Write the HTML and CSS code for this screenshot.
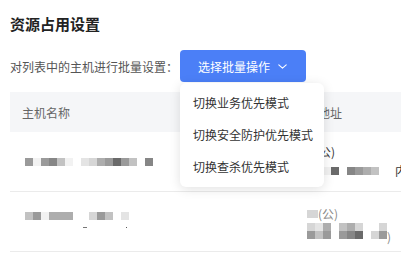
FILE: index.html
```html
<!DOCTYPE html>
<html lang="zh-CN">
<head>
    <meta charset="UTF-8">
    <meta name="viewport" content="width=device-width, initial-scale=1.0">
    <title>资源占用设置</title>
    <link rel="stylesheet" href="styles.css">
</head>
<body>
    <div class="panel">
        <h2 class="title">资源占用设置</h2>

        <div class="batch">
            <span class="batch-label">对列表中的主机进行批量设置：</span>
            <div class="batch-select">
                <button class="batch-btn">选择批量操作
                    <svg class="chevron" width="9" height="5" viewBox="0 0 9 5">
                        <polyline points="0.8,0.8 4.5,4.2 8.2,0.8" fill="none" stroke="#fff" stroke-width="1.1" stroke-linecap="round" stroke-linejoin="round"/>
                    </svg>
                </button>
                <ul class="menu">
                    <li class="menu-item">切换业务优先模式</li>
                    <li class="menu-item">切换安全防护优先模式</li>
                    <li class="menu-item">切换查杀优先模式</li>
                </ul>
            </div>
        </div>

        <div class="table">
            <div class="row head">
                <div class="cell">主机名称</div>
                <div class="cell">IP地址</div>
            </div>

            <div class="row">
                <div class="cell">
                    <div class="mask first">
                        <i class="s6"></i><i class="s1"></i><i class="s6"></i><i class="s7"></i><i class="s4"></i><i class="s1"></i><i class="s0"></i><i class="s2"></i><i class="s3"></i><i class="s5"></i><i class="s6"></i><i class="s8"></i><i class="s6"></i><i class="s4"></i><i class="s0"></i><i class="s7"></i>
                    </div>
                </div>
                <div class="cell lines">
                    <div class="line"><i class="s3"></i><span class="txt">(公)</span></div>
                    <div class="line">
                        <i class="s4"></i><i class="s3"></i><i class="s1"></i><i class="s8"></i><i class="s0"></i><i class="s7"></i><i class="s6"></i><i class="s5"></i><i class="s4"></i><i class="s0"></i><i class="s0"></i><span class="txt">内</span>
                    </div>
                </div>
            </div>

            <div class="row">
                <div class="cell lines">
                    <div class="mask first">
                        <i class="s4"></i><i class="s6"></i><i class="s1"></i><i class="s5"></i><i class="s5"></i><i class="s5"></i><i class="s0"></i><i class="s0"></i><i class="s3"></i><i class="s6"></i><i class="s4"></i><i class="s0"></i><i class="s2"></i>
                    </div>
                    <div class="marks"><b class="dash"></b><b class="dot"></b></div>
                </div>
                <div class="cell lines">
                    <div class="line"><i class="s3 slim"></i><span class="txt faded">(公)</span></div>
                    <div class="mask">
                        <i class="s3"></i><i class="s2"></i><i class="s5"></i><i class="s0"></i><i class="s4"></i><i class="s5"></i><i class="s3"></i><i class="s0"></i><i class="s0"></i><i class="s3"></i>
                    </div>
                    <div class="mask">
                        <i class="s6"></i><i class="s4"></i><i class="s6"></i><i class="s0"></i><i class="s6"></i><i class="s7"></i><i class="s8"></i><i class="s0"></i><i class="s3"></i><i class="s6"></i><span class="txt faded">)</span>
                    </div>
                </div>
            </div>
        </div>
    </div>
</body>
</html>
```

FILE: styles.css
```css
* {
    margin: 0;
    padding: 0;
    box-sizing: border-box;
}

body {
    font-family: "Noto Sans CJK SC", "Noto Sans", sans-serif;
    background-color: #fff;
    color: #333;
    overflow: hidden;
}

.panel {
    padding: 14px 0 0 10px;
}

.title {
    font-size: 15px;
    font-weight: 700;
    color: #222;
    line-height: 20px;
}

.batch {
    display: flex;
    align-items: center;
    margin-top: 16px;
}

.batch-label {
    font-size: 12px;
    color: #555;
    margin-right: 2px;
}

.batch-select {
    position: relative;
}

.batch-btn {
    display: flex;
    align-items: center;
    height: 32px;
    width: 126px;
    padding-left: 18px;
    background-color: #4b7ff7;
    color: #fff;
    font-family: inherit;
    font-size: 12px;
    border: none;
    border-radius: 4px;
}

.chevron {
    margin-left: 8px;
}

.menu {
    position: absolute;
    top: 33px;
    left: 0;
    width: 144px;
    padding: 4px 0;
    list-style: none;
    background-color: #fff;
    border-radius: 6px;
    box-shadow: 0 2px 12px rgba(0, 0, 0, 0.12);
    z-index: 2;
}

.menu-item {
    height: 32px;
    line-height: 32px;
    padding-left: 13px;
    font-size: 12px;
    color: #333;
    white-space: nowrap;
}

.table {
    margin-top: 10px;
    width: 400px;
}

.row {
    display: grid;
    grid-template-columns: 285px 1fr;
    height: 60px;
    border-bottom: 1px solid #ebebeb;
}

.row.head {
    height: 40px;
    background-color: #f5f6f8;
    border-bottom: none;
}

.cell {
    display: flex;
    align-items: center;
    padding: 0 12px;
    font-size: 12px;
    color: #666;
    white-space: nowrap;
    overflow: hidden;
}

.cell.lines {
    flex-direction: column;
    align-items: flex-start;
    justify-content: center;
}

.line {
    display: flex;
    align-items: center;
    height: 19px;
}

.mask {
    display: flex;
    height: 8px;
}

.mask.first {
    margin-left: 3px;
}

.mask i,
.line i {
    display: block;
    width: 8px;
    height: 8px;
}

.line i.slim {
    width: 11px;
}

.txt {
    font-size: 12px;
    color: #333;
    line-height: 12px;
}

.txt.faded {
    color: #8a8a8a;
}

.marks {
    display: flex;
    align-items: center;
    height: 8px;
    margin-top: 3px;
}

.dash {
    width: 4px;
    height: 1px;
    margin-left: 61px;
    background-color: #777;
}

.dot {
    width: 1px;
    height: 1px;
    margin-left: 39px;
    background-color: #555;
}

.s0 { background-color: #ffffff; }
.s1 { background-color: #f2f2f2; }
.s2 { background-color: #e4e4e4; }
.s3 { background-color: #d6d6d6; }
.s4 { background-color: #c2c2c2; }
.s5 { background-color: #adadad; }
.s6 { background-color: #9a9a9a; }
.s7 { background-color: #868686; }
.s8 { background-color: #6a6a6a; }
```
